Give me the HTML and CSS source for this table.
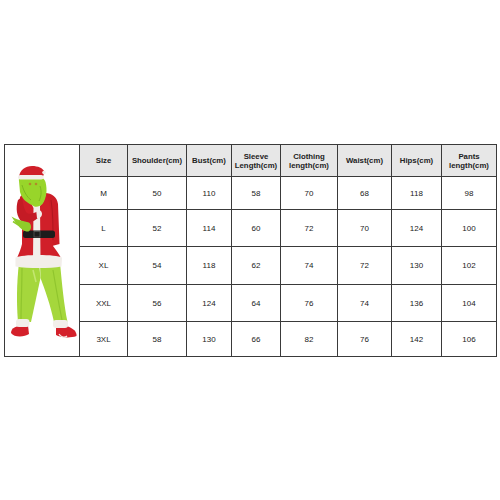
FILE: index.html
```html
<!DOCTYPE html>
<html>
<head>
<meta charset="utf-8">
<link rel="stylesheet" href="styles.css">
</head>
<body>
<div class="page">
  <div class="chart">
    <div class="photo">
      <svg class="figure" viewBox="5 145 74 211" width="74" height="211" xmlns="http://www.w3.org/2000/svg">
        <!-- shoes -->
        <path d="M11,333 C11,327 18,325 28,325.5 L29,334 C24,337.5 14,337.5 11,333 Z" fill="#d4202a"/>
        <path d="M56,326.5 L68,326.5 C73,328.5 77,331.5 76.5,336 C70,338.5 60,337.5 56,335 Z" fill="#d4202a"/>
        <path d="M59,334 C61,337.5 65,338 67,336" stroke="#f2eeea" stroke-width="1.3" fill="none"/>
        <!-- pants -->
        <path d="M19,263 L39,263 L40.5,278 L31,322 L18,322 C16.5,305 16.5,284 19,263 Z" fill="#a5d73c"/>
        <path d="M40,263 L60,263 C62,284 64,305 67.5,322 L54,322 C50.5,305 45,290 40.5,278 Z" fill="#a5d73c"/>
        <path d="M22,268 C22,285 21,305 21,320" stroke="#90c52e" stroke-width="1.2" fill="none"/>
        <path d="M53,270 C56,288 59,305 62,320" stroke="#90c52e" stroke-width="1.2" fill="none"/>
        <path d="M33,270 L36,282" stroke="#c4e670" stroke-width="1.5" fill="none"/>
        <!-- cuffs -->
        <rect x="16" y="319" width="13.5" height="8" rx="3" fill="#f2eeea"/>
        <rect x="53" y="320" width="15" height="8" rx="3" fill="#f2eeea"/>
        <!-- hanging arm on viewer's right -->
        <path d="M45,193 C52,193 57,197 58,204 L59.5,244 L52,246 L50,214 C48,206 46,199 45,193 Z" fill="#cc1d27"/>
        <!-- torso -->
        <path d="M20,197 C23,193 28,192 33,192 L46,193 C49,200 51,210 52,222 L53,246 C56,250 59,254 61,258 L17,258 C19,253 21,249 22,244 L22,222 C20,214 19,205 20,197 Z" fill="#d01f29"/>
        <path d="M51,200 C53,212 53,226 53,240" stroke="#a8141d" stroke-width="0.8" fill="none"/>
        <!-- white front strip and collar -->
        <path d="M29,193 C34,191 42,191 46,194 L43,202 L40,206 L40.5,258 L33,258 L33.5,208 L30,201 Z" fill="#f2eeea"/>
        <!-- hem -->
        <path d="M15.5,257.5 C22,254 56,254 62,257.5 L61.5,266.5 C50,268.5 28,268.5 15.5,266.5 Z" fill="#f2eeea"/>
        <!-- belt -->
        <rect x="23" y="230.5" width="32" height="7.5" rx="2.5" fill="#1c1c1c"/>
        <rect x="34" y="231.5" width="6" height="5.5" fill="none" stroke="#555" stroke-width="0.8"/>
        <!-- crossed sleeve -->
        <path d="M18,200 C15.5,208 16.5,217 22,222 C28,225 35,221 40,216 L38,211 C33,214 28,215 26,212 C23.5,208 23,203 22,197 Z" fill="#c41b25"/>
        <path d="M36,209 C39,209 42,211 42,214 C42,217 39,219 37,218 Z" fill="#f2eeea"/>
        <!-- glove -->
        <path d="M11.5,216.5 C15,218.5 19,220 23,221 L29,222.5 C32,225 31.5,230 28.5,231.5 C24.5,232 21,229 19,226.5 C16,223 13.5,220 11.5,216.5 Z" fill="#8fcc2a"/>
        <path d="M13,221.5 L20,226" stroke="#8fcc2a" stroke-width="1.5"/>
        <!-- green furry face -->
        <path d="M19,181 C18,176 24,175 30,176 C38,175 44,177 45.5,182 C47.5,190 46.5,198 42.5,204 C39,207 35,208 32,205 C27,203 22,199 20,192 Z" fill="#98d52a"/>
        <path d="M22,185 C24,192 27,197 31,200 M40,186 C42,192 41,197 39,201" stroke="#7db61f" stroke-width="1" fill="none"/>
        <circle cx="30" cy="184" r="1.3" fill="#b08a2a"/>
        <circle cx="36" cy="184" r="1.3" fill="#b08a2a"/>
        <!-- hat -->
        <path d="M19,178 C19,170 25.5,166 32,166 C38,166 43,168 44.5,172 L42.5,178 Z" fill="#d01f29"/>
        <rect x="18" y="175" width="25.5" height="4.5" rx="2.2" fill="#f2eeea"/>
        <circle cx="44" cy="172.5" r="1.8" fill="#f2eeea"/>
      </svg>
    </div>

    <div class="cell head">Size</div>
    <div class="cell head">Shoulder(cm)</div>
    <div class="cell head">Bust(cm)</div>
    <div class="cell head">Sleeve<br>Length(cm)</div>
    <div class="cell head">Clothing<br>length(cm)</div>
    <div class="cell head">Waist(cm)</div>
    <div class="cell head">Hips(cm)</div>
    <div class="cell head">Pants<br>length(cm)</div>

    <div class="cell">M</div><div class="cell">50</div><div class="cell">110</div><div class="cell">58</div><div class="cell">70</div><div class="cell">68</div><div class="cell">118</div><div class="cell">98</div>
    <div class="cell">L</div><div class="cell">52</div><div class="cell">114</div><div class="cell">60</div><div class="cell">72</div><div class="cell">70</div><div class="cell">124</div><div class="cell">100</div>
    <div class="cell">XL</div><div class="cell">54</div><div class="cell">118</div><div class="cell">62</div><div class="cell">74</div><div class="cell">72</div><div class="cell">130</div><div class="cell">102</div>
    <div class="cell">XXL</div><div class="cell">56</div><div class="cell">124</div><div class="cell">64</div><div class="cell">76</div><div class="cell">74</div><div class="cell">136</div><div class="cell">104</div>
    <div class="cell">3XL</div><div class="cell">58</div><div class="cell">130</div><div class="cell">66</div><div class="cell">82</div><div class="cell">76</div><div class="cell">142</div><div class="cell">106</div>
  </div>
</div>
</body>
</html>
```

FILE: styles.css
```css
html, body {
  margin: 0;
  padding: 0;
  background: #ffffff;
}

.page {
  width: 500px;
  height: 500px;
  padding: 144px 0 0 4px;
  box-sizing: border-box;
}

.chart {
  display: grid;
  width: 493px;
  box-sizing: border-box;
  padding: 1px;
  gap: 1px;
  background: #3a3a3a;
  grid-template-columns: 74px 47px 58px 44px 48px 56px 53px 49px 54px;
  grid-template-rows: 31px 32px 36px 37px 36px 34px;
  font-family: "Liberation Sans", Arial, sans-serif;
  color: #222222;
}

.photo {
  grid-row: 1 / 7;
  grid-column: 1;
  background: #ffffff;
  display: flex;
}

.figure {
  display: block;
}

.cell {
  background: #ffffff;
  display: flex;
  align-items: center;
  justify-content: center;
  text-align: center;
  font-size: 8px;
  line-height: 9px;
}

.head {
  background: #e7e7e7;
  font-weight: bold;
  font-size: 7.8px;
}
```
